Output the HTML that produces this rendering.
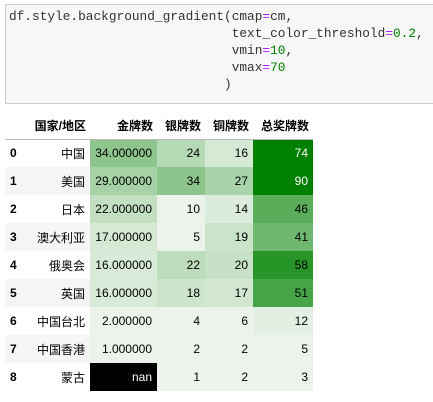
<!DOCTYPE html>
<html><head><meta charset="utf-8"><style>
body{margin:0;background:#fff;width:433px;height:402px;overflow:hidden;position:relative;font-family:"Liberation Sans","Noto Sans CJK SC",sans-serif;}
.code{position:absolute;left:5px;top:4px;width:440px;height:100px;background:#f7f7f7;border:1px solid #cfcfcf;box-sizing:border-box;}
pre{margin:0;position:absolute;left:9px;top:8px;font-family:"Liberation Mono",monospace;font-size:12.8px;line-height:17px;color:#333;}
.o{color:#aa22ff}.n{color:#008000}
table{position:absolute;left:5px;top:112px;border-collapse:collapse;font-size:12px;color:#000;table-layout:fixed;width:308px;}
th,td{height:28px;padding:0 5px;text-align:right;box-sizing:border-box;white-space:nowrap;overflow:visible;}
thead th{height:27px;border-bottom:1px solid #bdbdbd;font-weight:bold;padding:0 4px;}
tbody th{text-align:left;font-weight:bold;}
tr.g th,tr.g td.c{background:#f5f5f5}
.w{color:#fff}
</style></head><body>
<div class="code"></div>
<pre>df.style.background_gradient(cmap<span class="o">=</span>cm,
                             text_color_threshold<span class="o">=</span><span class="n">0.2</span>,
                             vmin<span class="o">=</span><span class="n">10</span>,
                             vmax<span class="o">=</span><span class="n">70</span>
                            )</pre>
<table>
<colgroup><col style="width:25px"><col style="width:60px"><col style="width:67px"><col style="width:48px"><col style="width:48px"><col style="width:60px"></colgroup>
<thead><tr><th></th><th>国家/地区</th><th>金牌数</th><th>银牌数</th><th>铜牌数</th><th>总奖牌数</th></tr></thead>
<tbody>
<tr><th>0</th><td class="c">中国</td><td style="background:#8dc58d">34.000000</td><td style="background:#b4d9b4">24</td><td style="background:#d5e9d5">16</td><td class="w" style="background:#008000">74</td></tr>
<tr class="g"><th>1</th><td class="c">美国</td><td style="background:#a6d2a6">29.000000</td><td style="background:#8dc58d">34</td><td style="background:#a9d4a9">27</td><td class="w" style="background:#008000">90</td></tr>
<tr><th>2</th><td class="c">日本</td><td style="background:#c2dfc2">22.000000</td><td style="background:#ebf3eb">10</td><td style="background:#dcecdc">14</td><td style="background:#5aae5a">46</td></tr>
<tr class="g"><th>3</th><td class="c">澳大利亚</td><td style="background:#d5e9d5">17.000000</td><td style="background:#ebf3eb">5</td><td style="background:#cae4ca">19</td><td style="background:#6fb86f">41</td></tr>
<tr><th>4</th><td class="c">俄奥会</td><td style="background:#d8ead8">16.000000</td><td style="background:#bcdcbc">22</td><td style="background:#c6e1c6">20</td><td style="background:#289528">58</td></tr>
<tr class="g"><th>5</th><td class="c">英国</td><td style="background:#d8ead8">16.000000</td><td style="background:#cce5cc">18</td><td style="background:#d1e7d1">17</td><td style="background:#46a446">51</td></tr>
<tr><th>6</th><td class="c">中国台北</td><td style="background:#ebf3eb">2.000000</td><td style="background:#ebf3eb">4</td><td style="background:#ebf3eb">6</td><td style="background:#e3efe3">12</td></tr>
<tr class="g"><th>7</th><td class="c">中国香港</td><td style="background:#ebf3eb">1.000000</td><td style="background:#ebf3eb">2</td><td style="background:#ebf3eb">2</td><td style="background:#ebf3eb">5</td></tr>
<tr><th>8</th><td class="c">蒙古</td><td class="w" style="background:#000">nan</td><td style="background:#ebf3eb">1</td><td style="background:#ebf3eb">2</td><td style="background:#ebf3eb">3</td></tr>
</tbody></table>
</body></html>
